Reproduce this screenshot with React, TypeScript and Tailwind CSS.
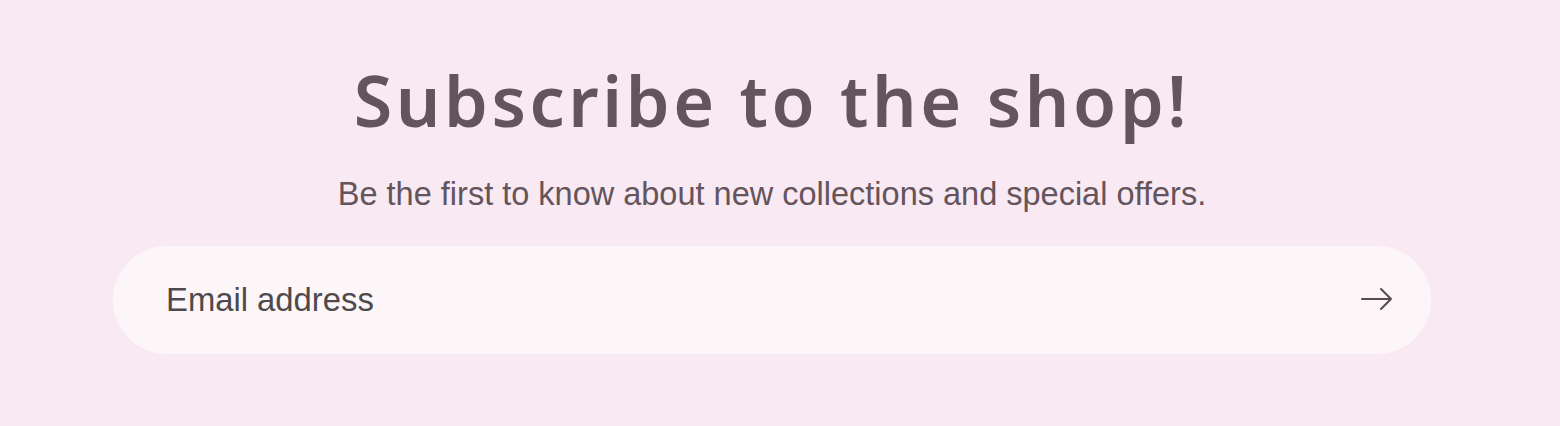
export default function App() {
  return (
    <div className="w-[1560px] h-[426px] bg-[#f8e9f2] overflow-hidden">
      <div className="w-[1544px] flex flex-col items-center pt-[54px]">
        <h1
          className="text-[70px] leading-[92px] font-semibold tracking-[3.6px] text-[#64545c]"
          style={{ fontFamily: '"Noto Sans", sans-serif' }}
        >
          Subscribe to the shop!
        </h1>
        <p
          className="mt-[28px] text-[32.5px] leading-[40px] text-[#64545c]"
          style={{ fontFamily: '"Liberation Sans", Arial, sans-serif' }}
        >
          Be the first to know about new collections and special offers.
        </p>
        <div className="mt-[32px] w-[1318px] h-[108px] rounded-full bg-[#fdf6f9] flex items-center justify-between pl-[53px] pr-[37px]">
          <span
            className="text-[32.8px] text-[#4e4a4c]"
            style={{ fontFamily: '"Liberation Sans", Arial, sans-serif' }}
          >
            Email address
          </span>
          <svg width="34" height="24" viewBox="0 0 34 24" fill="none" stroke="#5a4a52" strokeWidth="2" strokeLinecap="round" strokeLinejoin="round" className="-mt-[2px]">
            <path d="M2 12h29M21 2l10 10-10 10" />
          </svg>
        </div>
      </div>
    </div>
  );
}
